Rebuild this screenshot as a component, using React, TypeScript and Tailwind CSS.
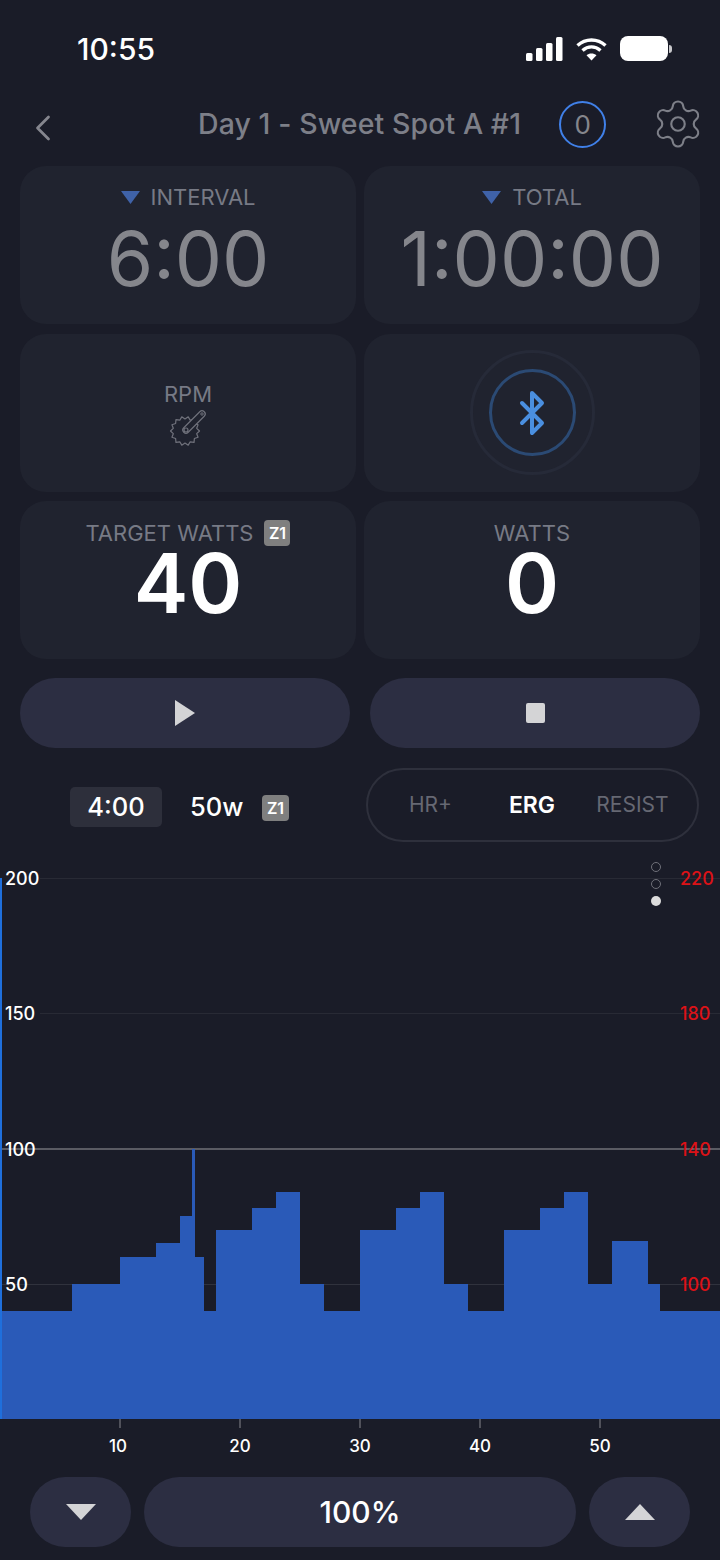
import React from 'react';
import { Bluetooth, ChevronLeft, Settings } from 'lucide-react';

// [start x, end x, top y] in px, chart top = 860
const bars: [number, number, number][] = [
  [0, 72, 1311], [72, 120, 1284], [120, 156, 1257], [156, 180, 1243], [180, 192, 1216], [192, 195, 1149],
  [195, 204, 1257], [204, 216, 1311], [216, 252, 1230], [252, 276, 1208], [276, 300, 1192], [300, 324, 1284],
  [324, 360, 1311], [360, 396, 1230], [396, 420, 1208], [420, 444, 1192], [444, 468, 1284], [468, 504, 1311],
  [504, 540, 1230], [540, 564, 1208], [564, 588, 1192], [588, 612, 1284], [612, 648, 1241], [648, 660, 1284],
  [660, 720, 1311],
];

const CHART_TOP = 860;
const leftLabels = [[200, 878], [150, 1013], [100, 1149], [50, 1284]];
const rightLabels = [[220, 878], [180, 1013], [140, 1149], [100, 1284]];
const ticks = [10, 20, 30, 40, 50];

const Card: React.FC<{ children: React.ReactNode }> = ({ children }) => (
  <div className="h-[158px] rounded-[26px] bg-[#20232f] flex flex-col items-center">{children}</div>
);

const Z1: React.FC<{ className?: string }> = ({ className }) => (
  <span className={`h-[26px] rounded-[4px] bg-[#7f7f7f] text-white text-[16px] font-semibold flex items-center justify-center ${className ?? ''}`}>
    Z1
  </span>
);

const CrankIcon = () => {
  const cx = 16;
  const cy = 22;
  const teeth = Array.from({ length: 14 }, (_, i) => {
    const a = (i / 14) * Math.PI * 2;
    const b = ((i + 0.5) / 14) * Math.PI * 2;
    return `${cx + 14.5 * Math.cos(a)},${cy + 14.5 * Math.sin(a)} ${cx + 12 * Math.cos(b)},${cy + 12 * Math.sin(b)}`;
  }).join(' ');
  return (
    <svg width="38" height="38" viewBox="0 0 38 38" fill="none">
      <polygon points={teeth} stroke="#70727c" strokeWidth="1.2" strokeLinejoin="round" />
      <line x1="17" y1="21" x2="33" y2="5" stroke="#70727c" strokeWidth="7.500" strokeLinecap="round" />
      <line x1="17" y1="21" x2="33" y2="5" stroke="#20232f" strokeWidth="5.200" strokeLinecap="round" />
      <circle cx="17" cy="21" r="2" stroke="#70727c" strokeWidth="1.2" />
      <circle cx="33" cy="5" r="1.200" stroke="#70727c" strokeWidth="1" />
    </svg>
  );
};

export default function App() {
  return (
    <div className="w-[720px] h-[1560px] bg-[#1a1c28] overflow-hidden flex flex-col" style={{ fontFamily: 'Inter, sans-serif' }}>
      {/* status bar */}
      <div className="h-[100px] flex items-start justify-between pt-[31px] pl-[77px] pr-[48px] shrink-0">
        <span className="text-white text-[30px] leading-[36px] font-medium">10:55</span>
        <div className="flex items-center gap-[12px] pt-[5px]">
          <svg width="37" height="24" viewBox="0 0 37 24" fill="white">
            <rect x="0" y="16" width="6.500" height="8" rx="1.500" />
            <rect x="10" y="11" width="6.500" height="13" rx="1.500" />
            <rect x="20" y="6" width="6.500" height="18" rx="1.500" />
            <rect x="30" y="0" width="6.500" height="24" rx="1.500" />
          </svg>
          <svg width="33" height="24" viewBox="0 0 32 24" fill="none" stroke="white" strokeWidth="3.400">
            <path d="M2 8.500c8-7.400 20-7.400 28 0" />
            <path d="M7 13.500c5.400-4.800 12.600-4.800 18 0" />
            <path d="M16 23.500 11 18.200c2.800-2.400 7.200-2.400 10 0Z" fill="white" stroke="none" />
          </svg>
          <div className="flex items-center">
            <div className="w-[48px] h-[25px] rounded-[8px] bg-white" />
            <div className="w-[3px] h-[8px] rounded-r-[3px] bg-[#c9c9cc] ml-[1px]" />
          </div>
        </div>
      </div>

      {/* header */}
      <div className="h-[66px] shrink-0 flex items-center">
        <ChevronLeft size={44} strokeWidth={1.5} color="#85868e" className="ml-[21px] mt-[-11px]" />
        <span className="ml-[133px] text-[28.500px] leading-[36px] tracking-[0.08px] font-medium text-[#7d7f88] whitespace-nowrap mt-[-18px]">Day 1 - Sweet Spot A #1</span>
        <div className="ml-[38px] w-[47px] h-[47px] rounded-full border-[2.500px] border-[#4080e8] flex items-center justify-center text-[#85868c] text-[26px] mt-[-18px] shrink-0">
          0
        </div>
        <Settings size={54} strokeWidth={0.95} color="#7d7f88" className="ml-[45px] mt-[-18px] shrink-0" />
      </div>

      {/* stat cards */}
      <div className="grid grid-cols-2 gap-x-[8px] gap-y-[9.500px] px-[20px] shrink-0">
        <Card>
          <div className="flex items-center gap-[11px] mt-[17px] h-[28px]">
            <svg width="19" height="13" viewBox="0 0 19 13"><path d="M0 0h19l-9.500 13Z" fill="#3f62a8" /></svg>
            <span className="text-[22px] leading-[28px] text-[#777a85]">INTERVAL</span>
          </div>
          <span className="text-[75px] leading-[84px] font-normal text-[#85868c] mt-[6px]">6:00</span>
        </Card>
        <Card>
          <div className="flex items-center gap-[11px] mt-[17px] h-[28px]">
            <svg width="19" height="13" viewBox="0 0 19 13"><path d="M0 0h19l-9.500 13Z" fill="#3f62a8" /></svg>
            <span className="text-[22px] leading-[28px] text-[#777a85]">TOTAL</span>
          </div>
          <span className="text-[75px] leading-[84px] font-normal text-[#85868c] mt-[6px]">1:00:00</span>
        </Card>
        <Card>
          <span className="text-[22px] leading-[28px] text-[#777a85] mt-[46px]">RPM</span>
          <div className="mt-[1px]"><CrankIcon /></div>
        </Card>
        <Card>
          <div className="h-full flex items-center justify-center">
            <div className="w-[125px] h-[125px] rounded-full border-[3px] border-[#262a38] flex items-center justify-center">
              <div className="w-[87px] h-[87px] rounded-full border-[3px] border-[#2b4a74] flex items-center justify-center">
                <Bluetooth size={48} strokeWidth={2} color="#4a8fe0" />
              </div>
            </div>
          </div>
        </Card>
        <Card>
          <div className="flex items-center gap-[11px] mt-[18px] h-[28px]">
            <span className="text-[22px] leading-[28px] text-[#777a85]">TARGET WATTS</span>
            <Z1 className="w-[26px]" />
          </div>
          <span className="text-[82px] leading-[64px] font-semibold text-white mt-[5px]">40</span>
        </Card>
        <Card>
          <span className="text-[22px] leading-[28px] text-[#777a85] mt-[18px]">WATTS</span>
          <span className="text-[82px] leading-[64px] font-semibold text-white mt-[5px]">0</span>
        </Card>
      </div>

      {/* play / stop */}
      <div className="flex gap-[20px] px-[20px] mt-[19px] shrink-0">
        <button className="flex-1 h-[70px] rounded-[35px] bg-[#2c2e42] flex items-center justify-center">
          <svg width="20" height="26" viewBox="0 0 20 26"><path d="M0 0l20 13L0 26Z" fill="#d4d4d6" /></svg>
        </button>
        <button className="flex-1 h-[70px] rounded-[35px] bg-[#2c2e42] flex items-center justify-center">
          <div className="w-[19px] h-[20px] rounded-[2px] bg-[#d4d4d6]" />
        </button>
      </div>

      {/* current step + mode */}
      <div className="flex items-center mt-[20px] h-[74px] shrink-0">
        <div className="w-[366px] h-full flex items-center pl-[70px] pt-[4px] shrink-0">
          <div className="w-[92px] h-[40px] rounded-[5px] bg-[#2d2f3b] flex items-center justify-center text-white text-[25.500px] font-medium">4:00</div>
          <span className="w-[100px] pl-[28px] text-white text-[25.500px] font-medium whitespace-nowrap">50w</span>
          <Z1 className="w-[27px] mt-[2px]" />
        </div>
        <div className="w-[333px] h-[74px] rounded-[37px] border-2 border-[#2e303c] flex items-center text-[21px] text-[#666873]">
          <span className="w-[125px] text-center">HR+</span>
          <span className="w-[78px] text-center text-white text-[23px] font-semibold">ERG</span>
          <span className="w-[123px] text-center">RESIST</span>
        </div>
      </div>

      {/* chart */}
      <div className="relative h-[600px] mt-[18px] shrink-0">
        <svg width="720" height="600" viewBox={`0 ${CHART_TOP} 720 600`} className="block">
          <line x1="40" x2="720" y1="878.500" y2="878.500" stroke="#282a35" />
          <line x1="40" x2="720" y1="1013.500" y2="1013.500" stroke="#282a35" />
          <line x1="0" x2="720" y1="1284.500" y2="1284.500" stroke="#30323d" />
          <line x1="0" x2="720" y1="1149" y2="1149" stroke="#5a5b63" strokeWidth="2" />
          {bars.map(([x0, x1, top]) => (
            <rect key={x0} x={x0} y={top} width={x1 - x0} height={1419 - top} fill="#2a5ab8" />
          ))}
          <rect x="0" y="878" width="2" height="541" fill="#1f6fdc" />
          {ticks.map(t => (
            <line key={t} x1={t * 12} x2={t * 12} y1="1419" y2="1428" stroke="#85868c" />
          ))}
        </svg>

        {leftLabels.map(([v, y]) => (
          <span key={v} className="absolute left-[5px] text-white text-[18px] leading-[20px] font-medium" style={{ top: y - CHART_TOP - 9 }}>{v}</span>
        ))}
        {rightLabels.map(([v, y]) => (
          <span key={v} className="absolute left-[680px] text-[#dc1217] text-[18px] leading-[20px] font-medium" style={{ top: y - CHART_TOP - 9 }}>{v}</span>
        ))}
        {ticks.map(t => (
          <span key={t} className="absolute w-[40px] text-center text-white text-[17px] leading-[20px] font-medium" style={{ left: t * 12 - (t === 10 ? 22 : 20), top: 576 }}>{t}</span>
        ))}

        {/* page dots */}
        <div className="absolute left-[651px] top-[2px] flex flex-col gap-[7px]">
          <div className="w-[10px] h-[10px] rounded-full border-[1.500px] border-[#6f7079]" />
          <div className="w-[10px] h-[10px] rounded-full border-[1.500px] border-[#6f7079]" />
          <div className="w-[10px] h-[10px] rounded-full bg-[#dcdcdc]" />
        </div>
      </div>

      {/* bottom controls */}
      <div className="mt-[17px] px-[30px] flex gap-[13px] shrink-0">
        <button className="w-[101px] h-[70px] rounded-[35px] bg-[#2c2e42] flex items-center justify-center">
          <svg width="30" height="16" viewBox="0 0 30 16"><path d="M0 0h30L15 16Z" fill="#d4d4d6" /></svg>
        </button>
        <button className="flex-1 h-[70px] rounded-[35px] bg-[#2c2e42] text-white text-[30px] font-medium">100%</button>
        <button className="w-[101px] h-[70px] rounded-[35px] bg-[#2c2e42] flex items-center justify-center">
          <svg width="30" height="16" viewBox="0 0 30 16"><path d="M0 16h30L15 0Z" fill="#d4d4d6" /></svg>
        </button>
      </div>
    </div>
  );
}
